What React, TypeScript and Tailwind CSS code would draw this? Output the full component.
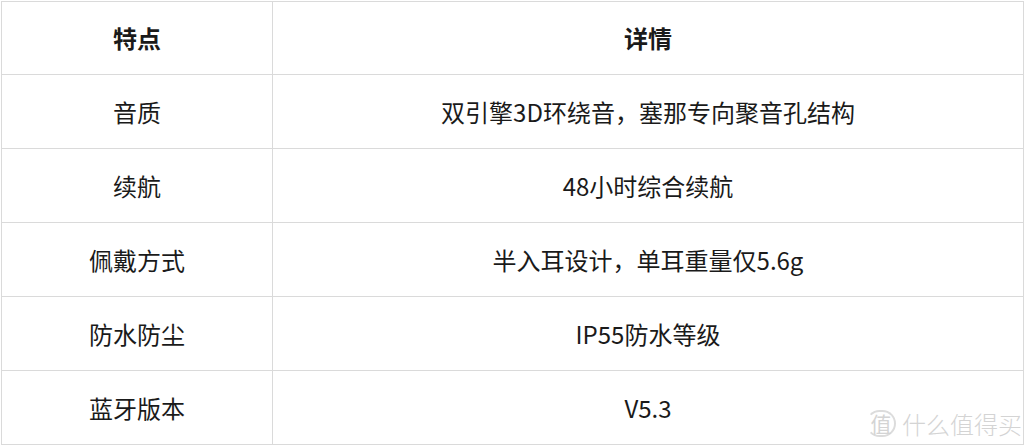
const rows: [string, string][] = [
  ["音质", "双引擎3D环绕音，塞那专向聚音孔结构"],
  ["续航", "48小时综合续航"],
  ["佩戴方式", "半入耳设计，单耳重量仅5.6g"],
  ["防水防尘", "IP55防水等级"],
  ["蓝牙版本", "V5.3"],
];

function Watermark() {
  return (
    <div className="absolute left-[866px] top-[410px] h-[27px] flex items-center gap-[6px] text-[#d4d4d4] pointer-events-none">
      <div className="w-[30px] h-[27px] rounded-full border-[2px] border-[#dcdcdc] border-l-transparent flex items-center justify-center text-[21px] leading-none">
        值
      </div>
      <span className="text-[24px] leading-none font-light tracking-[0px]">什么值得买</span>
    </div>
  );
}

export default function App() {
  return (
    <div
      className="relative w-[1025px] h-[447px] bg-white text-[#1a1a1a] overflow-hidden"
      style={{ fontFamily: '"Noto Sans CJK SC", "Noto Sans", sans-serif' }}
    >
      <table className="w-[1023px] ml-[1px] mt-[1px] border-collapse text-[24px]">
        <tbody>
          <tr className="h-[73px]">
            <th className="w-[271px] border border-[#dadada] font-bold text-center">特点</th>
            <th className="border border-[#dadada] font-bold text-center">详情</th>
          </tr>
          {rows.map(([k, v]) => (
            <tr key={k} className="h-[74px]">
              <td className="border border-[#dadada] text-center">{k}</td>
              <td className="border border-[#dadada] text-center">{v}</td>
            </tr>
          ))}
        </tbody>
      </table>
      <Watermark />
    </div>
  );
}
